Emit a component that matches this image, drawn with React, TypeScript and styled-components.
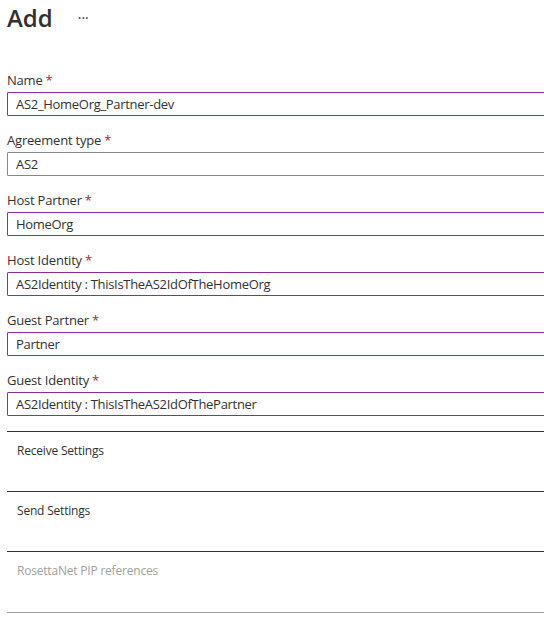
import React from "react";
import styled, { createGlobalStyle } from "styled-components";

const GlobalStyle = createGlobalStyle`
  html, body {
    margin: 0;
    padding: 0;
    background: #ffffff;
    overflow: hidden;
  }
  body {
    font-family: "Open Sans", "Noto Sans", sans-serif;
    color: #323130;
  }
`;

const Page = styled.div`
  width: 620px;
  padding: 0 0 0 7px;
`;

const Header = styled.header`
  display: flex;
  align-items: center;
  height: 36px;
  margin-bottom: 34px;
`;

const Title = styled.h1`
  margin: 0;
  font-size: 24px;
  font-weight: 600;
  line-height: 36px;
  color: #323130;
`;

const MoreButton = styled.button`
  margin-left: 25px;
  padding: 0;
  border: none;
  background: transparent;
  font-family: inherit;
  font-size: 14px;
  line-height: 14px;
  color: #323130;
  cursor: pointer;
`;

const Field = styled.div`
  display: flex;
  flex-direction: column;
  margin-bottom: 14px;
`;

const Label = styled.label`
  font-size: 13px;
  line-height: 20px;
  letter-spacing: -0.2px;
  margin-bottom: 2px;
  color: #323130;
`;

const Required = styled.span`
  color: #a4262c;
  margin-left: 3px;
`;

const TextInput = styled.input<{ $muted?: boolean }>`
  box-sizing: border-box;
  width: 100%;
  height: 24px;
  padding: 0 8px;
  margin: 0;
  border: 1px solid ${(p) => (p.$muted ? "#8a8886" : "#8a2da5")};
  border-radius: 1px;
  font-family: inherit;
  font-size: 13px;
  letter-spacing: -0.3px;
  color: #323130;
  background: #ffffff;
  outline: none;
`;

const Sections = styled.div`
  margin-top: 15px;
`;

const Section = styled.div<{ $disabled?: boolean }>`
  box-sizing: border-box;
  height: 60px;
  padding: 11px 0 0 10px;
  border-top: 1px solid #323130;
  font-size: 12px;
  line-height: 16px;
  letter-spacing: -0.2px;
  color: ${(p) => (p.$disabled ? "#a19f9d" : "#323130")};

  &:last-child {
    height: 62px;
    border-bottom: 1px solid #a19f9d;
  }
`;

const fields = [
  { label: "Name", value: "AS2_HomeOrg_Partner-dev" },
  { label: "Agreement type", value: "AS2", muted: true },
  { label: "Host Partner", value: "HomeOrg" },
  { label: "Host Identity", value: "AS2Identity : ThisIsTheAS2IdOfTheHomeOrg" },
  { label: "Guest Partner", value: "Partner" },
  { label: "Guest Identity", value: "AS2Identity : ThisIsTheAS2IdOfThePartner" },
];

const sections = [
  { title: "Receive Settings" },
  { title: "Send Settings" },
  { title: "RosettaNet PIP references", disabled: true },
];

export default function App() {
  return (
    <>
      <GlobalStyle />
      <Page>
        <Header>
          <Title>Add</Title>
          <MoreButton aria-label="More">···</MoreButton>
        </Header>
        {fields.map((f) => (
          <Field key={f.label}>
            <Label>
              {f.label}
              <Required>*</Required>
            </Label>
            <TextInput $muted={f.muted} value={f.value} readOnly />
          </Field>
        ))}
        <Sections>
          {sections.map((s) => (
            <Section key={s.title} $disabled={s.disabled}>
              {s.title}
            </Section>
          ))}
        </Sections>
      </Page>
    </>
  );
}
